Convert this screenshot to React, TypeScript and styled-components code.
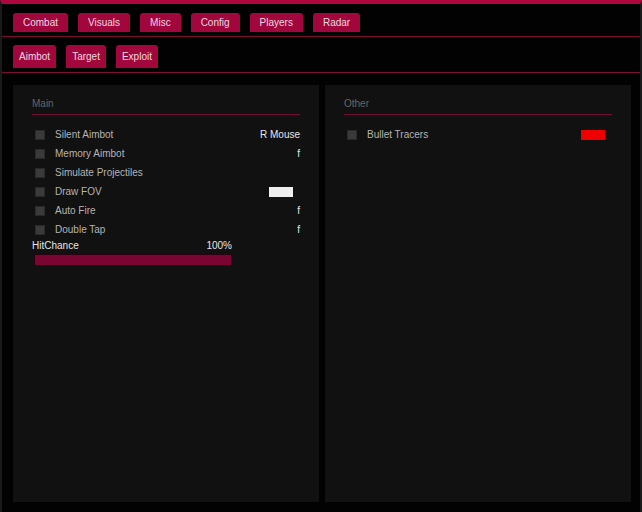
import React from 'react';
import styled, { createGlobalStyle } from 'styled-components';

const Global = createGlobalStyle`
  html, body { margin: 0; background: #000; }
  body { font-family: "Liberation Sans", Arial, sans-serif; font-size: 10px; color: #cfcfcf; }
`;

const Frame = styled.div`
  width: 642px;
  height: 512px;
  box-sizing: border-box;
  border-top: 4px solid #b0063f;
  border-left: 2px solid #1a1a1a;
  border-right: 2px solid #1a1a1a;
  background: #020202;
  display: flex;
  flex-direction: column;
`;

const TabRow = styled.div<{ $top: number }>`
  display: flex;
  gap: 10px;
  padding: ${(p) => p.$top}px 11px 0;
  border-bottom: 1px solid #7a0f33;
`;

const Tab = styled.div<{ $h: number; $pad: number }>`
  height: ${(p) => p.$h}px;
  padding: 0 ${(p) => p.$pad}px;
  display: flex;
  align-items: center;
  background: #a1063c;
  color: #f0d8e0;
  border-radius: 3px 3px 0 0;
  font-size: 10px;
  margin-bottom: 4px;
`;

const Panels = styled.div`
  flex: 1;
  display: flex;
  gap: 6px;
  padding: 12px 9px 10px 11px;
`;

const Panel = styled.div`
  flex: 1;
  background: #111;
  padding: 13px 19px;
`;

const Header = styled.div`
  color: #666;
  padding-bottom: 5px;
  border-bottom: 1px solid #6e0f30;
  margin-bottom: 10px;
`;

const Row = styled.div`
  display: flex;
  align-items: center;
  height: 19px;
  padding-left: 3px;
`;

const Check = styled.div`
  width: 10px;
  height: 10px;
  background: #3a3a3a;
  border: 1px solid #2a2a2a;
  box-sizing: border-box;
  margin-right: 10px;
`;

const Label = styled.div`
  flex: 1;
  color: #b4b4b4;
`;

const Value = styled.div`
  color: #e6e6e6;
`;

const Swatch = styled.div<{ $c: string; $w: number }>`
  width: ${(p) => p.$w}px;
  height: 10px;
  background: ${(p) => p.$c};
  margin-right: 7px;
`;

const SliderHead = styled.div`
  display: flex;
  justify-content: space-between;
  width: 200px;
  margin-top: 1px;
  color: #e6e6e6;
`;

const Bar = styled.div`
  width: 196px;
  height: 10px;
  margin: 3px 0 0 2px;
  background: #7a0532;
  border: 1px solid #2a0010;
`;

const rows: [string, React.ReactNode][] = [
  ['Silent Aimbot', <Value>R Mouse</Value>],
  ['Memory Aimbot', <Value>f</Value>],
  ['Simulate Projectiles', null],
  ['Draw FOV', <Swatch $c="#eee" $w={24} />],
  ['Auto Fire', <Value>f</Value>],
  ['Double Tap', <Value>f</Value>],
];

export default function App() {
  return (
    <>
      <Global />
      <Frame>
        <TabRow $top={9}>
          {['Combat', 'Visuals', 'Misc', 'Config', 'Players', 'Radar'].map((t) => (
            <Tab key={t} $h={19} $pad={10}>{t}</Tab>
          ))}
        </TabRow>
        <TabRow $top={8}>
          {['Aimbot', 'Target', 'Exploit'].map((t) => (
            <Tab key={t} $h={23} $pad={6}>{t}</Tab>
          ))}
        </TabRow>
        <Panels>
          <Panel>
            <Header>Main</Header>
            {rows.map(([l, v]) => (
              <Row key={l}>
                <Check />
                <Label>{l}</Label>
                {v}
              </Row>
            ))}
            <SliderHead>
              <span>HitChance</span>
              <span>100%</span>
            </SliderHead>
            <Bar />
          </Panel>
          <Panel>
            <Header>Other</Header>
            <Row>
              <Check />
              <Label>Bullet Tracers</Label>
              <Swatch $c="#e00" $w={24} />
            </Row>
          </Panel>
        </Panels>
      </Frame>
    </>
  );
}
